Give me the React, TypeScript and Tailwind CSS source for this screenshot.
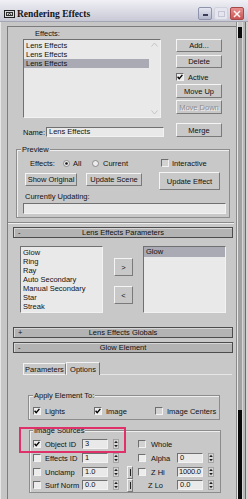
import React from 'react'

const raised =
  'border border-t-[#f4f4f4] border-l-[#f4f4f4] border-r-[#7a7a7a] border-b-[#7a7a7a] bg-[#c8c8c8]'
const sunken =
  'border border-t-[#707070] border-l-[#707070] border-r-[#f2f2f2] border-b-[#f2f2f2] bg-[#e9e9e9]'

function Btn({ className, children, disabled }: { className: string; children: React.ReactNode; disabled?: boolean }) {
  return (
    <div
      className={`${raised} ${className} flex items-center justify-center whitespace-nowrap ${
        disabled ? 'text-[#8e8e8e] [text-shadow:1px_1px_0_#f0f0f0]' : ''
      }`}
    >
      {children}
    </div>
  )
}

function Check({ checked, dim, className = '' }: { checked?: boolean; dim?: boolean; className?: string }) {
  return (
    <span
      className={`shrink-0 w-[8px] h-[8px] flex items-center justify-center border border-t-[#6e6e6e] border-l-[#6e6e6e] border-r-[#f2f2f2] border-b-[#f2f2f2] ${
        dim ? 'bg-[#d2d2d2]' : 'bg-[#ececec]'
      } ${className}`}
    >
      {checked && (
        <svg width="6" height="6" viewBox="0 0 6 6">
          <path d="M0.6 2.8 L2.2 4.6 L5.4 0.9" stroke="#000" strokeWidth="1.4" fill="none" />
        </svg>
      )}
    </span>
  )
}

function Radio({ on }: { on?: boolean }) {
  return (
    <svg width="7" height="7" viewBox="0 0 7 7" className="shrink-0">
      <circle cx="3.5" cy="3.5" r="3" fill="#ececec" stroke="#7a7a7a" strokeWidth="0.8" />
      {on && <circle cx="3.5" cy="3.5" r="1.3" fill="#111" />}
    </svg>
  )
}

function Field({ value, className }: { value: string; className: string }) {
  return (
    <span className={`${sunken} ${className} h-[10px] leading-[8px] shrink-0 overflow-hidden whitespace-nowrap`}>
      {value}
    </span>
  )
}

function Spin({ className = '' }: { className?: string }) {
  return (
    <svg width="6" height="10" viewBox="0 0 6 10" className={`shrink-0 ${className}`}>
      <rect x="0.5" y="0.5" width="5" height="9" fill="#d6d6d6" stroke="#9a9a9a" strokeWidth="0.8" />
      <path d="M3 1.8 L4.8 4 L1.2 4 Z" fill="#1e1e1e" />
      <path d="M1.2 6 L4.8 6 L3 8.2 Z" fill="#1e1e1e" />
    </svg>
  )
}

function Lock({ className = '' }: { className?: string }) {
  return (
    <span className={`${raised} ${className} shrink-0 w-[6px] h-[13px] -my-[2px] flex items-center justify-center`}>
      <span className="w-[1px] h-[7px] bg-[#222]" />
    </span>
  )
}

function Rollout({ sign, title, className }: { sign: string; title: string; className: string }) {
  return (
    <div
      className={`${className} ml-[5px] w-[220px] h-[11px] flex items-center border border-[#4c4c4c] bg-[#b3b3b3] shadow-[inset_1px_1px_0_#d6d6d6]`}
    >
      <span className="w-[12px] pl-[4px] leading-[9px]">{sign}</span>
      <span className="flex-1 text-center pr-[12px] leading-[9px]">{title}</span>
    </div>
  )
}

export default function App() {
  const effects = ['Lens Effects', 'Lens Effects', 'Lens Effects']
  const lensItems = ['Glow', 'Ring', 'Ray', 'Auto Secondary', 'Manual Secondary', 'Star', 'Streak']

  return (
    <div className="relative w-[248px] h-[499px] overflow-hidden bg-[#c6c6c6] text-[#111111] text-[7.5px] leading-[9px] [font-family:'Liberation_Sans',Arial,sans-serif]">
      {/* Title bar */}
      <div className="h-[22px] pt-[6px] flex items-center bg-linear-to-b from-[#f0f0f5] to-[#c8c9d6] border-b border-[#a4a6b4]">
        <svg width="11" height="8" viewBox="0 0 11 8" className="ml-[4px]">
          <rect x="0.5" y="0.5" width="10" height="7" fill="#d8d8e0" stroke="#202020" />
          <rect x="2.5" y="2.5" width="6" height="3" fill="none" stroke="#303030" />
          <path d="M4 5 L5.5 3 L7 5" stroke="#303030" fill="none" />
        </svg>
        <span className="ml-[2px] font-bold text-[9.5px] leading-[12px] text-[#141418] [font-family:'Liberation_Serif',serif]">
          Rendering Effects
        </span>
        <div className="ml-auto mr-[4px] flex items-center gap-[2px]">
          <div className="w-[14px] h-[13px] rounded-[2px] border border-[#8e94ac] bg-linear-to-b from-[#e4e6f0] to-[#b4b8cc] flex items-end justify-center pb-[3px]">
            <span className="w-[5px] h-[2px] bg-[#3a3e58]" />
          </div>
          <div className="w-[14px] h-[13px] rounded-[2px] border border-[#d0d2de] bg-[#e4e5ee] flex items-center justify-center">
            <span className="w-[7px] h-[6px] border border-[#c4c6d4]" />
          </div>
          <div className="w-[14px] h-[13px] rounded-[2px] border border-[#a44848] bg-linear-to-b from-[#e89090] to-[#c85454] flex items-center justify-center">
            <svg width="8" height="8" viewBox="0 0 8 8">
              <path d="M1 1 L7 7 M7 1 L1 7" stroke="#fff4f4" strokeWidth="1.5" />
            </svg>
          </div>
        </div>
      </div>

      <div className="flex h-[477px]">
        {/* left frame */}
        <div className="w-[7px] border-l border-[#e6e6e6]" />

        {/* main panel */}
        <div className="w-[229px] mt-[4px] border-l border-t border-[#7c7c7c] bg-[#c8c8c8]">
          <div className="mt-[2px] pl-[27px] h-[9px]">Effects:</div>

          <div className="mt-[1px] flex">
            <div className="ml-[15px] w-[141px]">
              <div className={`${sunken} w-[138px] h-[79px] flex`}>
                <div className="flex-1 pt-[1px]">
                  {effects.map((e, i) => (
                    <div key={i} className={`h-[9px] pl-[2px] ${i === 2 ? 'bg-[#aaaab4]' : ''}`}>
                      {e}
                    </div>
                  ))}
                </div>
                <div className="w-[11px] flex flex-col justify-between items-center py-[2px]">
                  <svg width="7" height="5" viewBox="0 0 7 5">
                    <path d="M0.5 4.5 L3.5 1 L6.5 4.5" stroke="#c4c4c4" fill="none" />
                  </svg>
                  <svg width="7" height="5" viewBox="0 0 7 5">
                    <path d="M0.5 0.5 L3.5 4 L6.5 0.5" stroke="#c4c4c4" fill="none" />
                  </svg>
                </div>
              </div>
              <div className="mt-[9px] h-[10px] flex items-center">
                <span className="w-[23px]">Name:</span>
                <Field value="Lens Effects" className="w-[118px] pl-[2px]" />
              </div>
            </div>

            <div className="ml-[12px] w-[46px] flex flex-col">
              <Btn className="h-[13px]">Add...</Btn>
              <Btn className="mt-[3px] h-[13px]">Delete</Btn>
              <div className="mt-[5px] h-[8px] flex items-center">
                <Check checked />
                <span className="ml-[4px]">Active</span>
              </div>
              <Btn className="mt-[3px] h-[14px]">Move Up</Btn>
              <Btn className="mt-[2px] h-[14px]" disabled>
                Move Down
              </Btn>
              <Btn className="mt-[9px] h-[14px]">Merge</Btn>
            </div>
          </div>

          {/* Preview */}
          <fieldset className="mt-[8px] ml-[8px] w-[214px] border border-[#8c8c8c] shadow-[inset_1px_1px_0_#eeeeee]">
            <legend className="ml-[4px] px-[1px] h-[9px] leading-[9px] bg-[#c8c8c8]">Preview</legend>
            <div className="pt-[5px] pb-[3px]">
              <div className="ml-[13px] h-[8px] flex items-center">
                <span className="w-[33px]">Effects:</span>
                <Radio on />
                <span className="ml-[3px] w-[19px]">All</span>
                <Radio />
                <span className="ml-[4px] w-[58px]">Current</span>
                <Check dim />
                <span className="ml-[3px]">Interactive</span>
              </div>
              <div className="mt-[5px] ml-[8px] flex items-start">
                <Btn className="mt-[1px] w-[52px] h-[13px]">Show Original</Btn>
                <Btn className="ml-[9px] mt-[1px] w-[56px] h-[13px]">Update Scene</Btn>
                <Btn className="ml-[17px] w-[61px] h-[18px]">Update Effect</Btn>
              </div>
              <div className="mt-[3px] ml-[8px] h-[8px] leading-[8px]">Currently Updating:</div>
              <div className={`${sunken} mt-[2px] ml-[6px] w-[203px] h-[11px] bg-[#e6e6e6]`} />
            </div>
          </fieldset>

          <div className="mt-[4px] mr-[2px] h-[2px] border-t border-[#8a8a8a] border-b border-b-[#efefef]" />

          <Rollout sign="-" title="Lens Effects Parameters" className="mt-[3px]" />

          <div className="mt-[8px] flex">
            <div className={`${sunken} ml-[12px] w-[83px] h-[67px] pt-[1px] pl-[2px]`}>
              {lensItems.map((l) => (
                <div key={l} className="h-[9px] whitespace-nowrap">
                  {l}
                </div>
              ))}
            </div>
            <div className="ml-[11px] w-[19px] flex flex-col">
              <Btn className="mt-[12px] h-[18px]">&gt;</Btn>
              <Btn className="mt-[10px] h-[18px]">&lt;</Btn>
            </div>
            <div className={`${sunken} ml-[10px] w-[83px] h-[67px]`}>
              <div className="h-[10px] pl-[2px] leading-[10px] bg-[#aaaab4]">Glow</div>
            </div>
          </div>

          <Rollout sign="+" title="Lens Effects Globals" className="mt-[14px]" />
          <Rollout sign="-" title="Glow Element" className="mt-[4px]" />

          {/* Tabs */}
          <div className="mt-[9px] h-[13px] flex items-end">
            <div className="ml-[15px] w-[43px] h-[12px] flex items-center justify-center border-t border-l border-[#f2f2f2] border-r border-r-[#808080] border-b border-b-[#efefef]">
              Parameters
            </div>
            <div className="w-[34px] h-[13px] flex items-center justify-center border-t border-l border-[#f2f2f2] border-r border-r-[#6e6e6e]">
              Options
            </div>
            <div className="flex-1 mr-[4px] border-b border-[#e6e6e6]" />
          </div>

          {/* Apply Element To */}
          <fieldset className="mt-[16px] ml-[20px] w-[192px] border border-[#8c8c8c] shadow-[inset_1px_1px_0_#eeeeee]">
            <legend className="ml-[4px] px-[1px] h-[9px] leading-[9px] bg-[#c8c8c8]">Apply Element To:</legend>
            <div className="pt-[7px] pb-[4px]">
              <div className="ml-[4px] h-[8px] flex items-center">
                <Check checked />
                <span className="ml-[4px] w-[49px]">Lights</span>
                <Check checked />
                <span className="ml-[4px] w-[49px]">Image</span>
                <Check dim />
                <span className="ml-[4px]">Image Centers</span>
              </div>
            </div>
          </fieldset>

          {/* Image Sources */}
          <fieldset className="mt-[6px] ml-[21px] w-[192px] border border-[#8c8c8c] shadow-[inset_1px_1px_0_#eeeeee]">
            <legend className="ml-[3px] px-[1px] h-[9px] leading-[9px] bg-[#c8c8c8]">Image Sources</legend>
            <div className="pt-[4px] pb-[2px]">
              <div className="ml-[3px] h-[10px] flex items-center">
                <Check checked />
                <span className="ml-[4px] w-[37px] whitespace-nowrap">Object ID</span>
                <Field value="3" className="w-[26px] pl-[2px]" />
                <Spin className="ml-[5px]" />
                <Check dim className="ml-[19px]" />
                <span className="ml-[5px]">Whole</span>
              </div>
              <div className="mt-[4px] ml-[3px] h-[10px] flex items-center">
                <Check />
                <span className="ml-[4px] w-[37px] whitespace-nowrap">Effects ID</span>
                <Field value="1" className="w-[26px] pl-[2px]" />
                <Spin className="ml-[5px]" />
                <Check className="ml-[19px]" />
                <span className="ml-[5px] w-[26px]">Alpha</span>
                <Field value="0" className="w-[26px] pl-[2px]" />
                <Spin className="ml-[5px]" />
              </div>
              <div className="mt-[4px] ml-[3px] h-[10px] flex items-center">
                <Check />
                <span className="ml-[4px] w-[37px] whitespace-nowrap">Unclamp</span>
                <Field value="1.0" className="w-[26px] pl-[2px]" />
                <Spin className="ml-[5px]" />
                <Lock className="ml-[8px]" />
                <Check className="ml-[5px]" />
                <span className="ml-[5px] w-[26px]">Z Hi</span>
                <Field value="1000.0" className="w-[26px] pl-[1px] tracking-[-0.2px]" />
                <Spin className="ml-[5px]" />
              </div>
              <div className="mt-[3px] ml-[3px] h-[10px] flex items-center">
                <Check />
                <span className="ml-[4px] w-[37px] whitespace-nowrap">Surf Norm</span>
                <Field value="0.0" className="w-[26px] pl-[2px]" />
                <Spin className="ml-[5px]" />
                <Lock className="ml-[8px]" />
                <span className="ml-[15px] w-[29px]">Z Lo</span>
                <Field value="0.0" className="w-[26px] pl-[2px]" />
                <Spin className="ml-[5px]" />
              </div>
            </div>
          </fieldset>
        </div>

        {/* right scroll strip */}
        <div className="w-[12px] flex">
          <div className="w-[1px] bg-[#8a8a8a]" />
          <div className="w-[1px] bg-[#e8e8e8]" />
          <div className="w-[4px] flex flex-col bg-[#a2a2a2]">
            <div className="h-[5px] bg-[#c6c6c6]" />
            <div className="h-[11px] bg-[#0a0a0a]" />
            <div className="flex-1" />
            <div className="h-[89px] bg-[#0a0a0a]" />
          </div>
          <div className="w-[1px] bg-[#d6d6d6]" />
          <div className="w-[2px] bg-[#b8b8b8]" />
          <div className="w-[1px] bg-[#6c6c6c]" />
          <div className="w-[2px] bg-[#d4d4d4]" />
        </div>
      </div>

      {/* red annotation frame */}
      <div className="absolute left-[19px] top-[427px] w-[107px] h-[26px] border-2 border-[#e0306a]" />
    </div>
  )
}
